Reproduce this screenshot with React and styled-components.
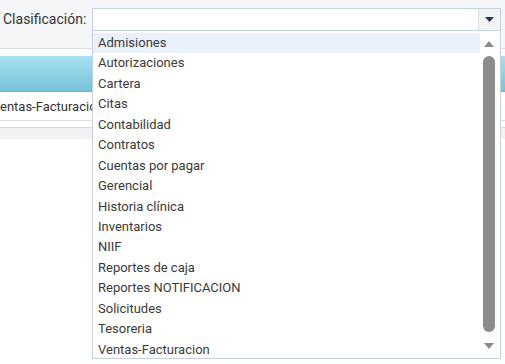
import React from "react";
import styled, { createGlobalStyle } from "styled-components";

const Global = createGlobalStyle`
  html, body { margin: 0; padding: 0; }
  body {
    width: 505px; height: 364px; overflow: hidden;
    background: #ffffff;
    font-family: Roboto, "Liberation Sans", sans-serif;
    font-size: 13px; color: #393939;
  }
`;

const Page = styled.div`
  position: relative;
  width: 505px;
  height: 364px;
  overflow: hidden;
`;

const TopBar = styled.div`
  height: 49px;
  background: #f4f6f8;
  border-bottom: 1px solid #d9dde2;
  display: flex;
  align-items: flex-start;
  padding-top: 8px;
  box-sizing: border-box;
`;

const Label = styled.label`
  width: 92px;
  box-sizing: border-box;
  padding-left: 3px;
  line-height: 22px;
  font-size: 14px;
  color: #333;
`;

const Combo = styled.div`
  position: relative;
  width: 409px;
`;

const Input = styled.div`
  height: 23px;
  box-sizing: border-box;
  background: #fff;
  border: 1px solid #c4d0dc;
  display: flex;
  justify-content: flex-end;
`;

const DropButton = styled.div`
  width: 21px;
  border-left: 1px solid #dbe3ea;
  background: #f1f4f7;
  display: flex;
  align-items: center;
  justify-content: center;
`;

const Grid = styled.div`
  margin-top: 7px;
`;

const HeaderRow = styled.div`
  height: 35px;
  background: linear-gradient(#a8e1f2, #76c3da);
  border-bottom: 1px solid #6db7cd;
`;

const Row = styled.div`
  height: 28px;
  display: flex;
  align-items: center;
  border-bottom: 1px solid #dfe3e7;
  overflow: hidden;
  white-space: nowrap;
`;

const CellText = styled.span`
  margin-left: -8px;
  font-size: 13px;
  color: #333;
`;

const Footer = styled.div`
  margin-top: 6px;
  height: 11px;
  border-top: 1px solid #d2d7dc;
  background: #f0f2f4;
`;

const List = styled.div`
  position: absolute;
  left: 0;
  top: 23px;
  width: 409px;
  height: 328px;
  box-sizing: border-box;
  background: #fff;
  border: 1px solid #c4d0dc;
  border-top: none;
  display: flex;
  padding: 2px 0 2px 0;
`;

const Items = styled.ul`
  list-style: none;
  margin: 0;
  padding: 0;
  flex: 1;
`;

const Item = styled.li`
  height: 20.45px;
  line-height: 20.45px;
  padding-left: 5px;
  font-size: 13px;
  color: #3a3a3a;
  background: ${(p) => (p.$active ? "#e9f1fb" : "transparent")};
`;

const Scroll = styled.div`
  width: 17px;
  display: flex;
  flex-direction: column;
  align-items: center;
  padding-right: 3px;
`;

const Arrow = styled.div`
  height: 20px;
  display: flex;
  align-items: center;
  justify-content: center;
`;

const Thumb = styled.div`
  width: 12px;
  flex: 1;
  background: #8c8c8c;
  border-radius: 6px;
  margin: 3px 0 4px;
`;

const items = [
  "Admisiones",
  "Autorizaciones",
  "Cartera",
  "Citas",
  "Contabilidad",
  "Contratos",
  "Cuentas por pagar",
  "Gerencial",
  "Historia clínica",
  "Inventarios",
  "NIIF",
  "Reportes de caja",
  "Reportes NOTIFICACION",
  "Solicitudes",
  "Tesoreria",
  "Ventas-Facturacion",
];

export default function App() {
  return (
    <Page>
      <Global />
      <TopBar>
        <Label>Clasificación:</Label>
        <Combo>
          <Input>
            <DropButton>
              <svg width="9" height="5" viewBox="0 0 9 5">
                <path d="M0 0H9L4.5 5Z" fill="#1f3550" />
              </svg>
            </DropButton>
          </Input>
          <List>
            <Items>
              {items.map((t, i) => (
                <Item key={t} $active={i === 0}>
                  {t}
                </Item>
              ))}
            </Items>
            <Scroll>
              <Arrow>
                <svg width="12" height="7" viewBox="0 0 12 7">
                  <path d="M1 7L6 1L11 7Z" fill="#8c8c8c" />
                </svg>
              </Arrow>
              <Thumb />
              <Arrow>
                <svg width="10" height="6" viewBox="0 0 10 6">
                  <path d="M0 0H10L5 6Z" fill="#8c8c8c" />
                </svg>
              </Arrow>
            </Scroll>
          </List>
        </Combo>
      </TopBar>
      <Grid>
        <HeaderRow />
        <Row>
          <CellText>Ventas-Facturacion</CellText>
        </Row>
        <Footer />
      </Grid>
    </Page>
  );
}
